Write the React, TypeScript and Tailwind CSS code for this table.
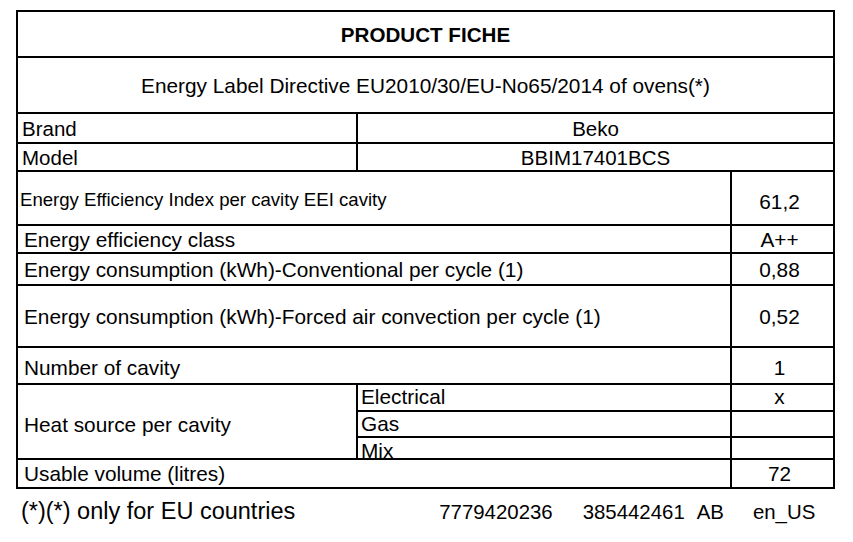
const FONT = "font-['Liberation_Sans',Arial,sans-serif]";

function ValueRow({
  label,
  value,
  h,
  labelClass = '',
  valueClass = '',
}: {
  label: string;
  value: string;
  h: string;
  labelClass?: string;
  valueClass?: string;
}) {
  return (
    <div className={`flex border-t-2 border-black ${h}`}>
      <div className={`w-[712px] flex items-center pl-[6px] text-[20.8px] leading-none ${labelClass}`}>{label}</div>
      <div className={`flex-1 border-l-2 border-black flex items-center justify-center pr-[6px] text-[20.8px] leading-none ${valueClass}`}>
        {value}
      </div>
    </div>
  );
}

export default function App() {
  return (
    <div className={`w-[853px] h-[542px] bg-white text-black overflow-hidden pt-[10px] pl-[16px] ${FONT}`}>
      <div className="w-[819px] border-2 border-black">
        <div className="h-[44px] flex items-center justify-center pt-[3px] text-[20.6px] font-bold leading-none">
          PRODUCT FICHE
        </div>
        <div className="h-[56px] border-t-2 border-black flex items-center justify-center pt-[2px] text-[20.8px] leading-none">
          Energy Label Directive EU2010/30/EU-No65/2014 of ovens(*)
        </div>
        <div className="h-[30px] border-t-2 border-black flex">
          <div className="w-[338px] flex items-center pl-[4px] pt-[3px] text-[20.5px] leading-none">Brand</div>
          <div className="flex-1 border-l-2 border-black flex items-center justify-center pt-[3px] text-[20.5px] leading-none">Beko</div>
        </div>
        <div className="h-[28px] border-t-2 border-black flex">
          <div className="w-[338px] flex items-center pl-[4px] pt-[3px] text-[20.5px] leading-none">Model</div>
          <div className="flex-1 border-l-2 border-black flex items-center justify-center pt-[3px] text-[20.5px] leading-none">
            BBIM17401BCS
          </div>
        </div>
        <ValueRow
          label="Energy Efficiency Index per cavity EEI cavity"
          value="61,2"
          h="h-[54px]"
          labelClass="!pl-[2px] pt-[4px] !text-[18.6px]"
          valueClass="pt-[8px]"
        />
        <ValueRow label="Energy efficiency class" value="A++" h="h-[28px]" labelClass="pt-[2px]" valueClass="pt-[2px]" />
        <ValueRow
          label="Energy consumption (kWh)-Conventional per cycle (1)"
          value="0,88"
          h="h-[32px]"
          labelClass="pt-[2px]"
          valueClass="pt-[2px]"
        />
        <ValueRow
          label="Energy consumption (kWh)-Forced air convection per cycle (1)"
          value="0,52"
          h="h-[62px]"
          labelClass="pt-[2px]"
          valueClass="pt-[2px]"
        />
        <ValueRow label="Number of cavity" value="1" h="h-[37px]" labelClass="pt-[5px]" valueClass="pt-[5px]" />
        <div className="h-[75px] border-t-2 border-black flex">
          <div className="w-[338px] flex items-center pl-[6px] pt-[8px] text-[20.8px] leading-none">Heat source per cavity</div>
          <div className="w-[374px] border-l-2 border-black flex flex-col text-[20.8px] leading-none">
            <div className="h-[25px] flex items-center pl-[3px]">Electrical</div>
            <div className="h-[26px] border-t-2 border-black flex items-center pl-[3px]">Gas</div>
            <div className="h-[22px] border-t-2 border-black flex items-center pl-[3px] pt-[6px]">Mix</div>
          </div>
          <div className="flex-1 border-l-2 border-black flex flex-col text-[20.8px] leading-none">
            <div className="h-[25px] flex items-center justify-center pr-[6px]">x</div>
            <div className="h-[26px] border-t-2 border-black" />
            <div className="h-[22px] border-t-2 border-black" />
          </div>
        </div>
        <ValueRow label="Usable volume (litres)" value="72" h="h-[29px]" labelClass="pt-[1px]" valueClass="pt-[1px]" />
      </div>
      <div className="mt-[11px] flex items-baseline leading-none">
        <span className="ml-[5px] text-[23.5px]">(*)(*) only for EU countries</span>
        <span className="ml-[144px] text-[20.4px]">7779420236</span>
        <span className="ml-[30px] text-[20.4px]">385442461</span>
        <span className="ml-[12px] text-[20.4px]">AB</span>
        <span className="ml-[29px] text-[20.4px]">en_US</span>
      </div>
    </div>
  );
}
